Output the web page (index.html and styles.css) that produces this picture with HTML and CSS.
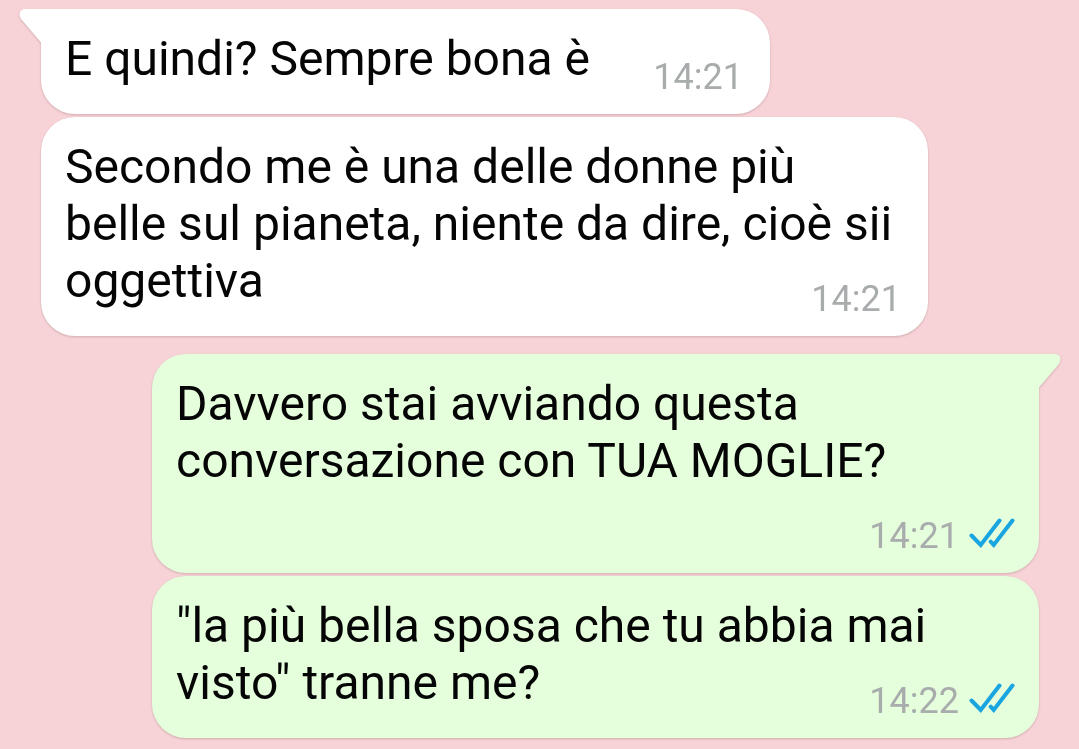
FILE: index.html
```
<!DOCTYPE html>
<html lang="it">
<head>
    <meta charset="UTF-8">
    <meta name="viewport" content="width=device-width, initial-scale=1">
    <title>Chat</title>
    <link rel="stylesheet" href="styles.css">
</head>
<body>
  <svg class="sprite" aria-hidden="true">
    <symbol id="tail" viewBox="0 0 24 36">
      <path d="M24 0H6C1 0-1 5 2 10L22 33.500H24Z"/>
    </symbol>
    <symbol id="ticks" viewBox="0 0 46 32">
      <path d="M2.500 18.500L11.700 28L30.500 3.500M21.700 24.700L24.700 28L43.500 3.500" fill="none" stroke="currentColor" stroke-width="4" stroke-linecap="round"/>
    </symbol>
  </svg>

  <main class="chat">
    <div class="message received short">
      <svg class="tail"><use href="#tail"/></svg>
      <p>E quindi? Sempre bona è</p>
      <div class="meta"><time>14:21</time></div>
    </div>

    <div class="message received">
      <p>Secondo me è una delle donne più<br>belle sul pianeta, niente da dire, cioè sii<br>oggettiva</p>
      <div class="meta"><time>14:21</time></div>
    </div>

    <div class="message sent first">
      <svg class="tail"><use href="#tail"/></svg>
      <p>Davvero stai avviando questa<br>conversazione con TUA MOGLIE?</p>
      <div class="meta own-line"><time>14:21</time><svg class="ticks" role="img" aria-label="Letto"><use href="#ticks"/></svg></div>
    </div>

    <div class="message sent">
      <p>"la più bella sposa che tu abbia mai<br>visto" tranne me?</p>
      <div class="meta"><time>14:22</time><svg class="ticks" role="img" aria-label="Letto"><use href="#ticks"/></svg></div>
    </div>
  </main>
</body>
</html>
```

FILE: styles.css
```
* { box-sizing: border-box; }
body { margin: 0; background: #f7d3d7; color: #050505; font-family: Roboto, sans-serif; }
.sprite { position: absolute; width: 0; height: 0; }
.chat { display: flex; flex-direction: column; gap: 3px; padding: 9px 40px 9px 41px; }

.message { position: relative; width: 887px; max-width: 90%; padding: 21px 24px 17px; border-radius: 34px; filter: drop-shadow(0 1px 1px rgba(120, 80, 80, 0.3)); }
.message p { margin: 0; font-size: 48px; line-height: 57px; }
.received { align-self: flex-start; background: #fff; fill: #fff; }
.received .meta { padding-right: 3px; }
.sent { align-self: flex-end; background: #e5fedb; fill: #e5fedb; }
.short { width: 729px; border-top-left-radius: 0; }
.first { margin-top: 15px; border-top-right-radius: 0; }

.tail { position: absolute; top: 0; width: 24px; height: 36px; }
.received .tail { left: -22px; }
.sent .tail { right: -22px; transform: scaleX(-1); }

.meta { display: flex; justify-content: flex-end; align-items: center; gap: 10px; height: 40px; margin-top: -30px; color: #a8acac; font-size: 36px; line-height: 40px; }
.own-line { margin-top: 27px; }
.ticks { width: 46px; height: 32px; margin-bottom: 6px; color: #18a5e0; }
```
